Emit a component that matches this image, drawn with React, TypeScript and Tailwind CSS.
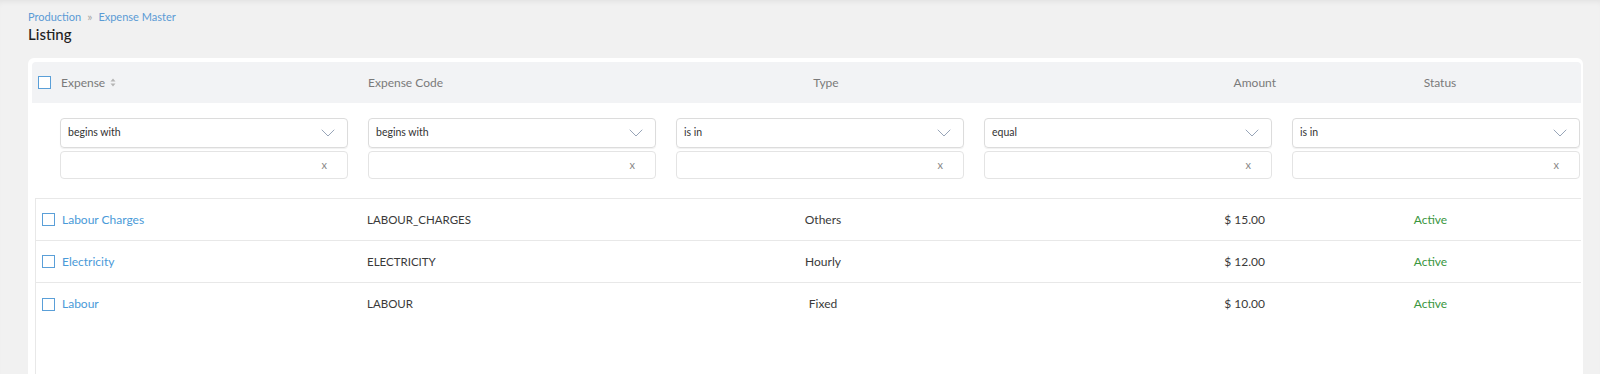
import { ChevronDown } from "lucide-react";

type Row = { name: string; code: string; type: string; amount: string; status: string };

const rows: Row[] = [
  { name: "Labour Charges", code: "LABOUR_CHARGES", type: "Others", amount: "$ 15.00", status: "Active" },
  { name: "Electricity", code: "ELECTRICITY", type: "Hourly", amount: "$ 12.00", status: "Active" },
  { name: "Labour", code: "LABOUR", type: "Fixed", amount: "$ 10.00", status: "Active" },
];

const filters = ["begins with", "begins with", "is in", "equal", "is in"];

function Box() {
  return <span className="inline-block h-[13px] w-[13px] shrink-0 border-[1.5px] border-[#5a9fd8] bg-white" />;
}

function SortIcon() {
  return (
    <svg width="6" height="9" viewBox="0 0 6 9" className="ml-[5px]">
      <path d="M3 0.5 L5.5 3.5 H0.5 Z" fill="#b5b5b5" />
      <path d="M3 8.5 L5.5 5.5 H0.5 Z" fill="#b5b5b5" />
    </svg>
  );
}

export default function App() {
  return (
    <div
      className="min-h-screen bg-[#f1f1f1] px-7 pt-[10px] shadow-[inset_0_5px_6px_-4px_rgba(0,0,0,0.08)]"
      style={{ fontFamily: "Lato, 'Noto Sans', sans-serif" }}
    >
      <div className="flex items-center text-[11px] leading-[14px] text-[#5b9bd5]">
        <span>Production</span>
        <span className="mx-[6px] text-[12px] leading-[14px] text-[#a8a8a8]">»</span>
        <span>Expense Master</span>
      </div>
      <div className="mt-0 text-[15px] font-medium leading-[20px] text-[#1f1f1f]">Listing</div>

      <div className="mt-[14px] w-[1555px] rounded-md bg-white pl-1 pt-1 pr-[2px]">
        {/* header */}
        <div className="grid h-[41px] grid-cols-[328px_308px_316px_300px_1fr] items-center rounded-t-sm bg-[#f2f3f5] text-[12px] text-[#7a7a7a]">
          <div className="flex items-center pl-[6px]">
            <Box />
            <span className="ml-[10px]">Expense</span>
            <SortIcon />
          </div>
          <div className="pl-2">Expense Code</div>
          <div className="text-center">Type</div>
          <div className="pr-2 text-right">Amount</div>
          <div className="pl-[15px] text-center">Status</div>
        </div>

        {/* filters */}
        <div className="grid grid-cols-[repeat(5,288px)] gap-x-[20px] pb-[19px] pl-[28px] pt-[15px]">
          {filters.map((f, i) => (
            <div key={i} className="flex flex-col gap-[3px]">
              <div className="flex h-[30px] items-center justify-between rounded border border-[#dcdcdc] pl-[7px] pr-[7px] text-[10.5px] text-[#333] shadow-[0_1px_1px_rgba(0,0,0,0.06)]">
                <span>{f}</span>
                <ChevronDown size={24} strokeWidth={0.9} className="text-[#8c9bb0]" />
              </div>
              <div className="flex h-[28px] items-center justify-end rounded border border-[#e4e4e4] pr-[20px] text-[11px] text-[#888]">
                x
              </div>
            </div>
          ))}
        </div>

        {/* rows */}
        <div className="ml-[3px] min-h-[200px] border-l border-t border-[#e8e8e8]">
          {rows.map((r) => (
            <div
              key={r.name}
              className="grid h-[42px] grid-cols-[323px_308px_312px_294px_1fr] items-center border-b border-[#e8e8e8] text-[12px] text-[#3a3a3a] last:border-b-0"
            >
              <div className="flex items-center pl-[6px]">
                <Box />
                <span className="ml-[7px] text-[#4a9ad8]">{r.name}</span>
              </div>
              <div className="pl-2 text-[11.5px]">{r.code}</div>
              <div className="text-center">{r.type}</div>
              <div className="pr-2 text-right">{r.amount}</div>
              <div className="pl-[7px] text-center text-[#3a963e]">{r.status}</div>
            </div>
          ))}
        </div>
      </div>
    </div>
  );
}
